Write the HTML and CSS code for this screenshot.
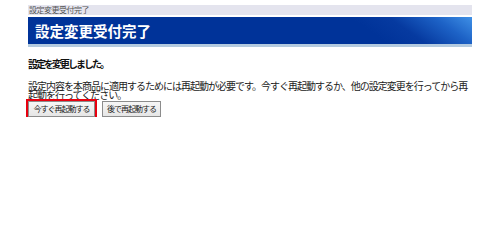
FILE: index.html
```html
<!DOCTYPE html>
<html lang="ja">
<head>
    <meta charset="UTF-8">
    <title>設定変更受付完了</title>
    <link rel="stylesheet" href="styles.css">
</head>
<body>
    <div class="page">
        <div class="crumb">設定変更受付完了</div>
        <h1 class="title">設定変更受付完了</h1>

        <p class="lead">設定を変更しました。</p>
        <p class="msg">設定内容を本商品に適用するためには再起動が必要です。今すぐ再起動するか、他の設定変更を行ってから再起動を行ってください。</p>

        <div class="actions">
            <button class="btn btn-focus">今すぐ再起動する</button>
            <button class="btn">後で再起動する</button>
        </div>
    </div>
</body>
</html>
```

FILE: styles.css
```css
* {
    box-sizing: border-box;
}

body {
    margin: 0;
    background-color: #ffffff;
    font-family: "Noto Sans CJK JP", "Liberation Sans", sans-serif;
    color: #111;
}

.page {
    width: 444px;
    margin: 5px 0 0 28px;
}

.crumb {
    height: 10px;
    padding-left: 1px;
    background-color: #e4e4ee;
    color: #555;
    font-size: 8px;
    letter-spacing: -0.5px;
    line-height: 10px;
}

.title {
    height: 30px;
    margin: 2px 0 0;
    padding-left: 7px;
    background: linear-gradient(215deg, #3f90e6 0, #1d62c6 22px, #063aa0 48px, #003399 70px);
    border-bottom: 3px solid #b3cadf;
    color: #ffffff;
    font-size: 14.5px;
    font-weight: bold;
    line-height: 27px;
}

.lead {
    margin: 11px 0 0;
    font-size: 10px;
    font-weight: bold;
    letter-spacing: -2px;
    line-height: 12px;
}

.msg {
    margin: 11px 0 0;
    font-size: 10px;
    letter-spacing: -1px;
    line-height: 9px;
    color: #222;
}

.actions {
    display: flex;
    gap: 7px;
    margin-top: 2px;
}

.btn {
    height: 16px;
    padding: 0 4px;
    background: linear-gradient(#f6f6f6, #e6e6e6);
    border: 1px solid #8c8c8c;
    border-radius: 0;
    color: #222;
    font-family: inherit;
    font-size: 8px;
    letter-spacing: -1px;
    line-height: 14px;
    cursor: pointer;
}

.btn-focus {
    width: 67px;
    outline: 2px solid #e8000f;
}
```
